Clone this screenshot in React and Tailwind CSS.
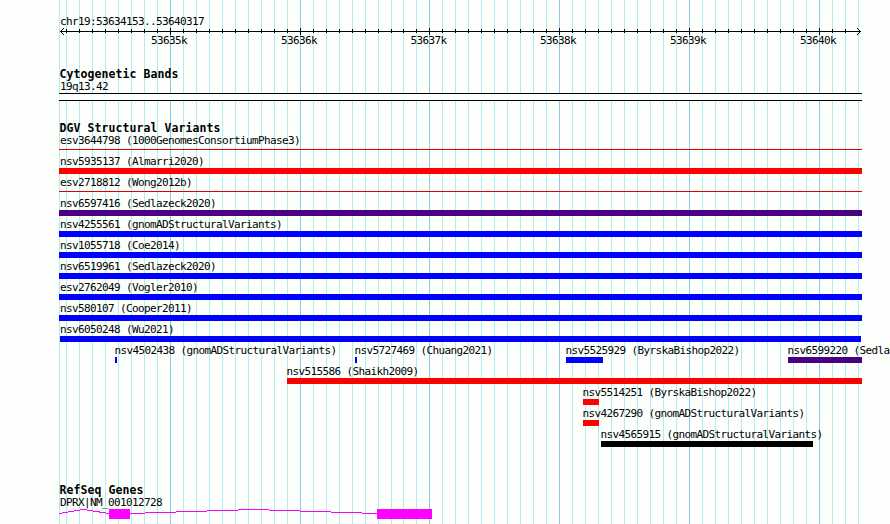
const majorLines = [170, 300, 429, 559, 689, 819];

const minorLines = [
  66, 79, 92, 105, 118, 131, 144, 157, 183, 196, 209, 222, 235, 248, 261, 274,
  287, 313, 326, 339, 352, 365, 378, 391, 403, 416, 442, 455, 468, 481, 494,
  507, 520, 533, 546, 572, 585, 598, 611, 624, 637, 650, 663, 676, 702, 715,
  728, 741, 754, 767, 780, 793, 806, 832, 845, 858,
];

const rulerLabels = [
  { text: "53635k", width: 130 },
  { text: "53636k", width: 130 },
  { text: "53637k", width: 129 },
  { text: "53638k", width: 130 },
  { text: "53639k", width: 130 },
  { text: "53640k", width: 130 },
];

const RED = "bg-[#ff0000]";
const BLUE = "bg-[#0000ff]";
const INDIGO = "bg-[#4b0082]";
const BLACK = "bg-black";

// variants that span the whole region
const fullRows = [
  { label: "esv3644798 (1000GenomesConsortiumPhase3)", thin: true },
  { label: "nsv5935137 (Almarri2020)", color: RED },
  { label: "esv2718812 (Wong2012b)", thin: true },
  { label: "nsv6597416 (Sedlazeck2020)", color: INDIGO },
  { label: "nsv4255561 (gnomADStructuralVariants)", color: BLUE },
  { label: "nsv1055718 (Coe2014)", color: BLUE },
  { label: "nsv6519961 (Sedlazeck2020)", color: BLUE },
  { label: "esv2762049 (Vogler2010)", color: BLUE },
  { label: "nsv580107 (Cooper2011)", color: BLUE },
  { label: "nsv6050248 (Wu2021)", color: BLUE, inset: true },
];

const partialRows = [
  [
    { label: "nsv4502438 (gnomADStructuralVariants)", start: 115, end: 117, color: BLUE },
    { label: "nsv5727469 (Chuang2021)", start: 355, end: 357, color: BLUE },
    { label: "nsv5525929 (ByrskaBishop2022)", start: 566, end: 603, color: BLUE },
    { label: "nsv6599220 (Sedla", start: 788, end: 862, color: INDIGO },
  ],
  [{ label: "nsv515586 (Shaikh2009)", start: 287, end: 862, color: RED }],
  [{ label: "nsv5514251 (ByrskaBishop2022)", start: 583, end: 599, color: RED }],
  [{ label: "nsv4267290 (gnomADStructuralVariants)", start: 583, end: 599, color: RED }],
  [{ label: "nsv4565915 (gnomADStructuralVariants)", start: 601, end: 813, color: BLACK }],
];

const GridLines = () => (
  <svg
    className="absolute inset-0 -z-10"
    width="890"
    height="524"
    shapeRendering="crispEdges"
  >
    {[59, ...minorLines].map((x) => (
      <rect key={x} x={x} y="0" width="1" height="524" fill="#afeeee" />
    ))}
    {majorLines.map((x) => (
      <rect key={x} x={x} y="0" width="1" height="524" fill="#87ceeb" />
    ))}
  </svg>
);

const Label = ({ children }) => (
  <p className="h-[13px] leading-[13px] whitespace-pre">{children}</p>
);

const Title = ({ children }) => (
  <h2 className="h-3 pl-[59.5px] text-[11.5px] leading-3 font-bold tracking-[0.077px] whitespace-pre">
    {children}
  </h2>
);

const Ruler = () => (
  <header className="pt-[15px]">
    <div className="pl-[60px]">
      <Label>chr19:53634153..53640317</Label>
    </div>
    <svg className="block" width="890" height="7" shapeRendering="crispEdges">
      <rect x="60" y="3" width="801" height="1" />
      {minorLines.slice(0, -1).map((x) => (
        <rect key={x} x={x} y="1" width="1" height="4" />
      ))}
      {majorLines.map((x) => (
        <rect key={x} x={x} y="0" width="1" height="7" />
      ))}
      <path d="M61 2h1v-1h1v-1h1v1h-1v1h-1v1h-1zM61 4h1v1h1v1h1v1h-1v-1h-1v-1h-1z" />
      <path d="M860 2h-1v-1h-1v-1h-1v1h1v1h1v1h1zM860 4h-1v1h-1v1h-1v1h1v-1h1v-1h1z" />
    </svg>
    <div className="-mt-px flex pl-[104px] text-center">
      {rulerLabels.map(({ text, width }) => (
        <div key={text} className="shrink-0" style={{ width }}>
          <Label>{text}</Label>
        </div>
      ))}
    </div>
  </header>
);

const FullRow = ({ label, color, thin, inset }) => (
  <div className="h-[21px] shrink-0">
    <div className="pl-[60px]">
      <Label>{label}</Label>
    </div>
    {thin ? (
      <div className="mt-[2px] ml-[59px] h-px w-[803px] bg-[#e00000]" />
    ) : (
      <div className={`h-[6px] ${inset ? "ml-[60px] w-[801px]" : "ml-[59px] w-[803px]"} ${color}`} />
    )}
  </div>
);

const PartialRow = ({ items }) => (
  <div className="flex h-[21px]">
    {items.map(({ label, start, end, color }, i) => (
      <div
        key={label}
        className="w-0 shrink-0"
        style={{ marginLeft: start - (i ? items[i - 1].start : 0) }}
      >
        <div className="-ml-[0.6px]">
          <Label>{label}</Label>
        </div>
        <div className={`h-[6px] ${color}`} style={{ width: end - start }} />
      </div>
    ))}
  </div>
);

const Gene = () => (
  <svg className="block" width="890" height="10" shapeRendering="crispEdges">
    <g fill="none" stroke="#ff00ff">
      <path d="M59 4.5L83.5 0.5L109 4.5" />
      <path d="M130 4.5L253.5 0.5L377 4.5" />
    </g>
    <rect x="109" y="0" width="21" height="10" fill="#ff00ff" />
    <rect x="377" y="0" width="55" height="10" fill="#ff00ff" />
  </svg>
);

export default function App() {
  return (
    <main className="relative isolate h-[524px] w-[890px] overflow-hidden bg-[#fdfffc] font-['DejaVu_Sans_Mono',monospace] text-[11px] tracking-[-0.622px] text-black">
      <GridLines />
      <Ruler />

      <section className="mt-[21px]">
        <Title>Cytogenetic Bands</Title>
        <div className="pl-[60px]">
          <Label>19q13.42</Label>
        </div>
        <div className="ml-[59px] h-2 w-[803px] border-y border-black bg-[#fdfffc]" />
      </section>

      <section className="mt-[21px]">
        <Title>DGV Structural Variants</Title>
        {fullRows.map((row) => (
          <FullRow key={row.label} {...row} />
        ))}
        {partialRows.map((items) => (
          <PartialRow key={items[0].label} items={items} />
        ))}
      </section>

      <section className="mt-[35px]">
        <Title>RefSeq Genes</Title>
        <div className="pl-[60px]">
          <Label>DPRX|NM_001012728</Label>
        </div>
        <Gene />
      </section>
    </main>
  );
}
